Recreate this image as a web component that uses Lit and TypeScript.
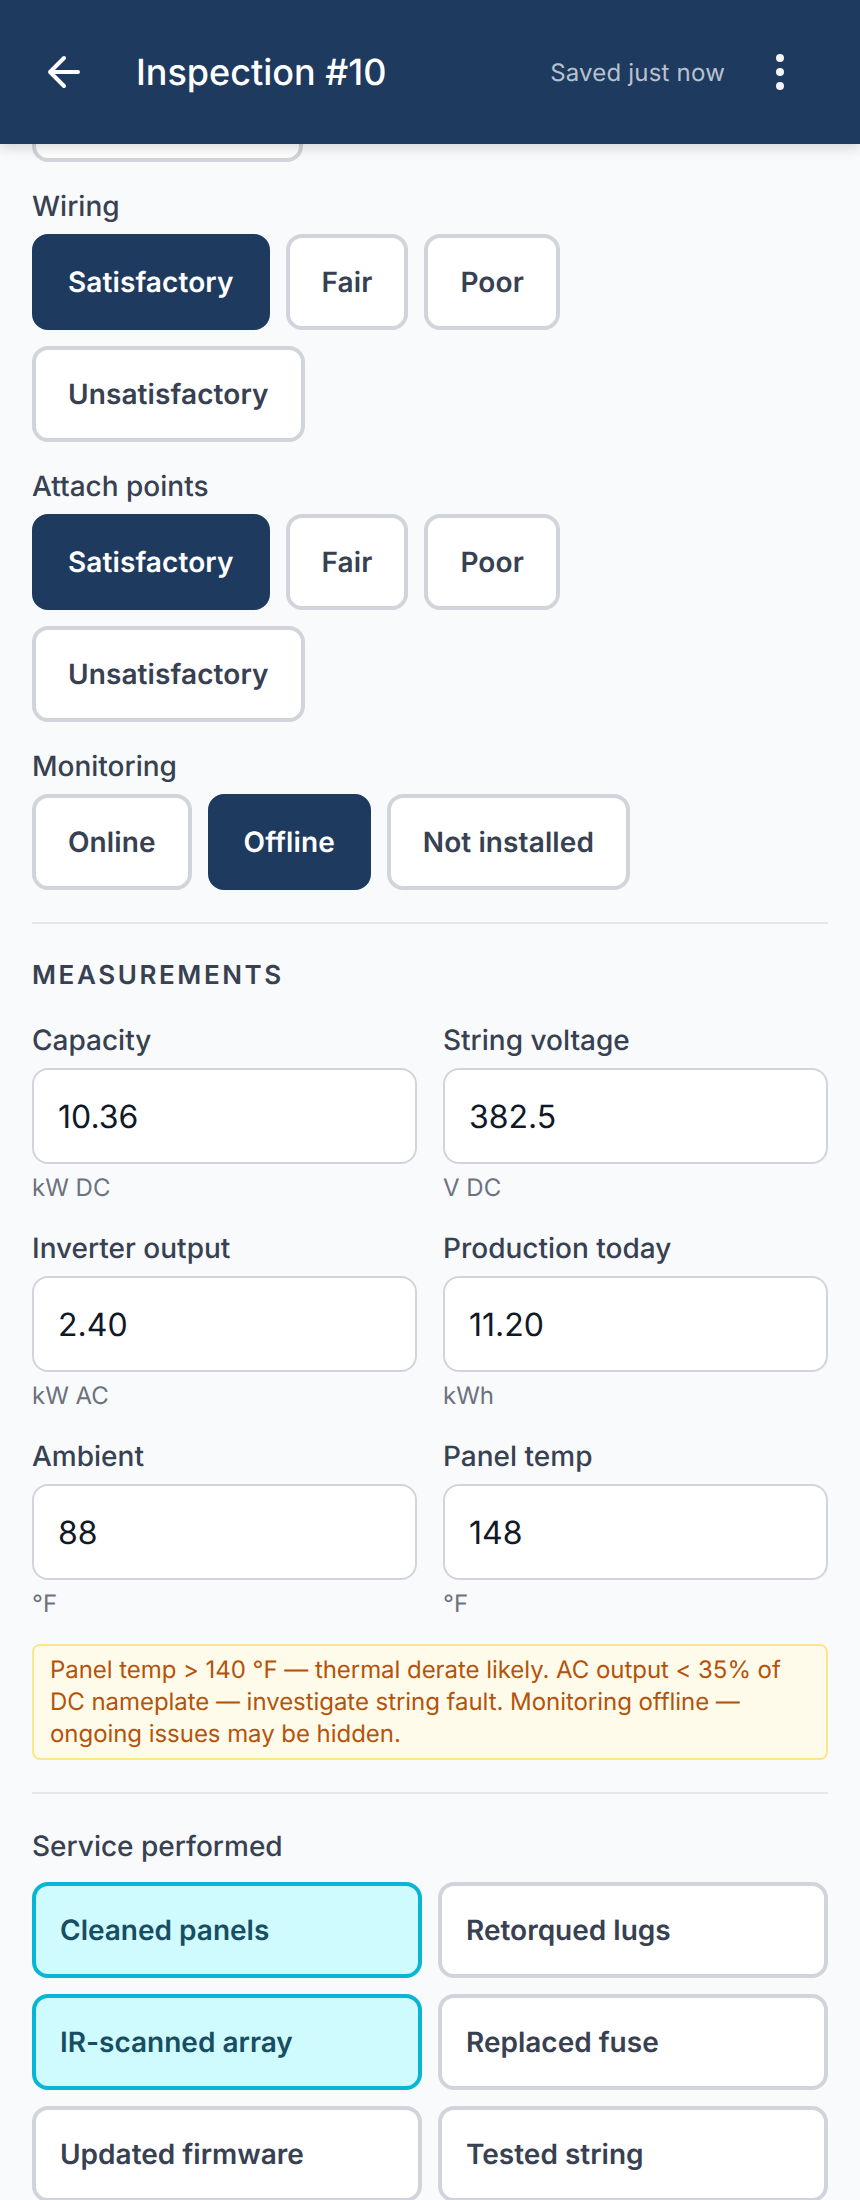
import { LitElement, html, css } from 'lit';
import { customElement } from 'lit/decorators.js';

const measurements = [
  { label: 'Capacity', value: '10.36', unit: 'kW DC' },
  { label: 'String voltage', value: '382.5', unit: 'V DC' },
  { label: 'Inverter output', value: '2.40', unit: 'kW AC' },
  { label: 'Production today', value: '11.20', unit: 'kWh' },
  { label: 'Ambient', value: '88', unit: '°F' },
  { label: 'Panel temp', value: '148', unit: '°F' },
];

const services = [
  { label: 'Cleaned panels', on: true },
  { label: 'Retorqued lugs', on: false },
  { label: 'IR-scanned array', on: true },
  { label: 'Replaced fuse', on: false },
  { label: 'Updated firmware', on: false },
  { label: 'Tested string', on: false },
];

const condition = ['Satisfactory', 'Fair', 'Poor', 'Unsatisfactory'];

@customElement('app-root')
export class AppRoot extends LitElement {
  static styles = css`
    :host {
      display: block;
      height: 2200px;
      overflow: hidden;
      background: #f9fafb;
      font-family: Inter, 'Liberation Sans', sans-serif;
      color: #374151;
      text-rendering: geometricPrecision;
    }
    * {
      box-sizing: border-box;
    }
    button,
    input {
      text-rendering: geometricPrecision;
    }
    .top {
      position: relative;
      z-index: 2;
      height: 144px;
      display: flex;
      align-items: center;
      padding: 0 76px 0 40px;
      background: #1e3a5f;
      color: #fff;
      box-shadow: 0 4px 12px rgba(0, 0, 0, 0.15);
    }
    .back {
      width: 48px;
      height: 48px;
      flex: none;
    }
    .title {
      margin-left: 48px;
      flex: 1;
      font-size: 36px;
      font-weight: 500;
    }
    .saved {
      font-size: 24px;
      letter-spacing: 0.2px;
      color: rgba(255, 255, 255, 0.7);
    }
    .kebab {
      display: flex;
      flex-direction: column;
      gap: 6px;
      margin-left: 51px;
    }
    .kebab i {
      width: 8px;
      height: 8px;
      border-radius: 50%;
      background: #f3f4f6;
    }
    main {
      padding: 0 32px;
    }
    .clip {
      height: 18px;
      overflow: hidden;
      display: flex;
      flex-direction: column;
      justify-content: flex-end;
      margin-bottom: 24px;
    }
    .stub {
      width: 271px;
    }
    .label {
      font-size: 28px;
      line-height: 40px;
      font-weight: 500;
      margin-bottom: 8px;
    }
    .chips {
      display: flex;
      flex-wrap: wrap;
      gap: 16px;
      margin-bottom: 24px;
    }
    .chip {
      height: 96px;
      padding: 0 32px;
      border: 4px solid #d1d5db;
      border-radius: 16px;
      background: #fff;
      font: 600 28px Inter, sans-serif;
      letter-spacing: 0.1px;
      color: #374151;
      flex: none;
    }
    .chip.on {
      background: #1e3a5f;
      border-color: #1e3a5f;
      color: #fff;
    }
    hr {
      border: 0;
      height: 2px;
      background: #e5e7eb;
      margin: 0;
    }
    .rule-a {
      margin-top: 32px;
    }
    h2 {
      margin: 32px 0 24px;
      font-size: 26px;
      line-height: 40px;
      font-weight: 600;
      letter-spacing: 2.6px;
    }
    .fields {
      display: grid;
      grid-template-columns: 1fr 1fr;
      column-gap: 26px;
      row-gap: 24px;
    }
    input {
      display: block;
      width: 100%;
      height: 96px;
      padding: 0 24px;
      border: 2px solid #d1d5db;
      border-radius: 16px;
      background: #fff;
      font: 400 32px Inter, sans-serif;
      color: #111827;
    }
    .unit {
      margin-top: 8px;
      font-size: 24px;
      line-height: 32px;
      color: #6b7280;
    }
    .warn {
      margin: 24px 0 32px;
      padding: 8px 16px;
      border: 2px solid #fde68a;
      border-radius: 8px;
      background: #fffbeb;
      font-size: 24px;
      line-height: 32px;
      letter-spacing: -0.05px;
      color: #b45309;
    }
    .service-label {
      margin-top: 32px;
      margin-bottom: 16px;
    }
    .services {
      display: grid;
      grid-template-columns: 1fr 1fr;
      gap: 16px;
    }
    .service {
      height: 96px;
      padding: 0 24px;
      border: 4px solid #d1d5db;
      border-radius: 16px;
      background: #fff;
      font: 600 28px Inter, sans-serif;
      color: #374151;
      text-align: left;
    }
    .service.on {
      background: #cffafe;
      border-color: #06b6d4;
      color: #164e63;
    }
  `;

  private chips(items: string[], active: string) {
    return html`<div class="chips">
      ${items.map((t) => html`<button class="chip ${t === active ? 'on' : ''}">${t}</button>`)}
    </div>`;
  }

  render() {
    return html`
      <header class="top">
        <svg class="back" viewBox="0 0 24 24" fill="none" stroke="currentColor" stroke-width="2" stroke-linecap="round" stroke-linejoin="round">
          <path d="M19 12H5M12 19l-7-7 7-7" />
        </svg>
        <div class="title">Inspection #10</div>
        <div class="saved">Saved just now</div>
        <div class="kebab"><i></i><i></i><i></i></div>
      </header>
      <main>
        <div class="clip"><button class="chip stub"></button></div>
        <div class="label">Wiring</div>
        ${this.chips(condition, 'Satisfactory')}
        <div class="label">Attach points</div>
        ${this.chips(condition, 'Satisfactory')}
        <div class="label">Monitoring</div>
        ${this.chips(['Online', 'Offline', 'Not installed'], 'Offline')}
        <hr class="rule-a" />
        <h2>MEASUREMENTS</h2>
        <div class="fields">
          ${measurements.map(
            (m) => html`<div>
              <div class="label">${m.label}</div>
              <input .value=${m.value} />
              <div class="unit">${m.unit}</div>
            </div>`
          )}
        </div>
        <div class="warn">
          Panel temp &gt; 140 °F — thermal derate likely. AC output &lt; 35% of DC nameplate — investigate string fault. Monitoring offline — ongoing issues may be hidden.
        </div>
        <hr />
        <div class="label service-label">Service performed</div>
        <div class="services">
          ${services.map((s) => html`<button class="service ${s.on ? 'on' : ''}">${s.label}</button>`)}
        </div>
      </main>
    `;
  }
}
